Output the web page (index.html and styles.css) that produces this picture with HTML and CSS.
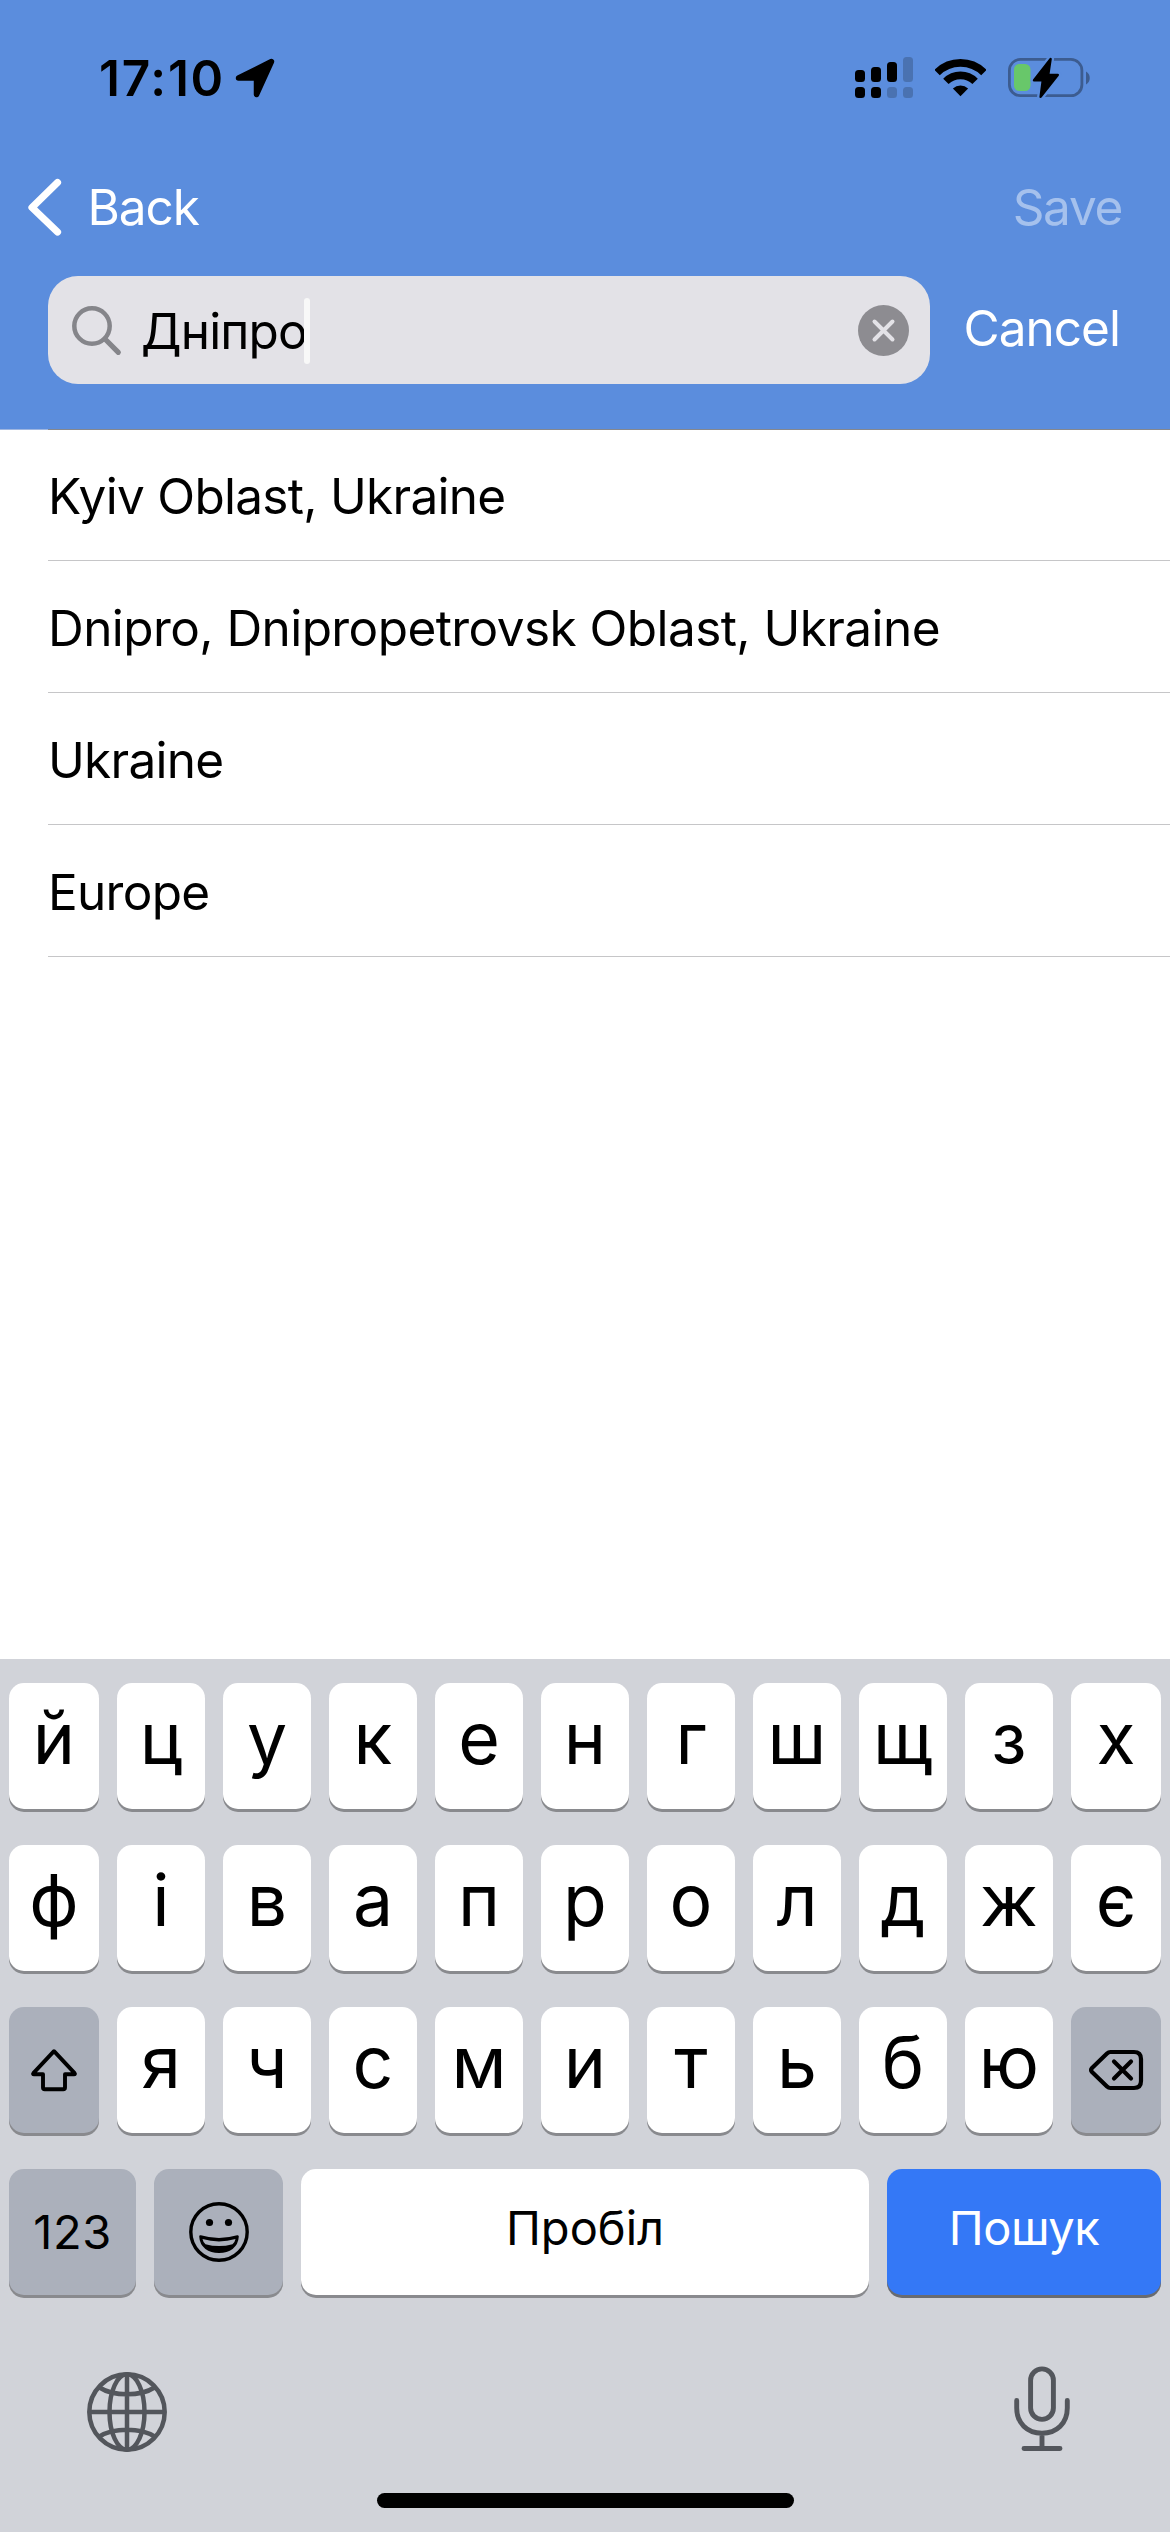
FILE: index.html
```
<!DOCTYPE html>
<html lang="uk">
<head>
<meta charset="utf-8">
<title>Location search</title>
<link rel="stylesheet" href="styles.css">
</head>
<body>
<div class="screen">
  <header class="header">
    <div class="status">
      <span class="time">17:10</span>
      <svg class="location" viewBox="0 0 40 40" width="40" height="40"><path d="M36.500 3.500 21.500 36.500V20H3.500Z" fill="#000" stroke="#000" stroke-width="5.500" stroke-linejoin="round"/></svg>
      <svg class="signal" viewBox="0 0 58 42" width="58" height="42">
        <g fill="#000"><rect y="13" width="10" height="12" rx="3.500"/><rect x="16" y="10" width="10" height="15" rx="3.500"/><rect x="32" y="5" width="10" height="20" rx="3.500"/><rect y="30" width="10" height="11" rx="3.500"/><rect x="16" y="30" width="10" height="11" rx="3.500"/></g>
        <g fill="#4a72b1"><rect x="48" width="10" height="25" rx="3.500"/><rect x="32" y="30" width="10" height="11" rx="3.500"/><rect x="48" y="30" width="10" height="11" rx="3.500"/></g>
      </svg>
      <svg class="wifi" viewBox="0 0 51 38" width="51" height="38">
        <g fill="none" stroke="#000" stroke-width="7.600"><path d="M2.100 13.600A33.100 33.100 0 0 1 48.900 13.600"/><path d="M10.900 22.400A20.600 20.600 0 0 1 40.100 22.400"/></g>
        <path d="M25.500 37.200 17.900 29.500A11 11 0 0 1 33.100 29.500Z"/>
      </svg>
      <svg class="battery" viewBox="0 0 83 42" width="83" height="42">
        <rect x="1.400" y="2.400" width="72.500" height="36.300" rx="11" fill="none" stroke="#3c5c90" stroke-width="2.800"/>
        <path d="M78 14.500C83 17 83 25 78 27.500Z" fill="#3c5c90"/>
        <rect x="6" y="7" width="16.500" height="27" rx="5.500" fill="#68c76a"/>
        <path d="M42.600 2 26 23.200H34.800L32.600 39.800 49.800 18H40.200Z" fill="#000" stroke="#5b8ddd" stroke-width="7" stroke-linejoin="round"/>
        <path d="M42.600 2 26 23.200H34.800L32.600 39.800 49.800 18H40.200Z" fill="#000" stroke="#000" stroke-width="2.400" stroke-linejoin="round"/>
      </svg>
    </div>
    <nav class="nav">
      <svg class="chevron" viewBox="0 0 34 58" width="34" height="58"><path d="M29.500 4.500 4 29.500 29.500 54" fill="none" stroke="#fff" stroke-width="7.200" stroke-linecap="round" stroke-linejoin="round"/></svg>
      <span class="back">Back</span>
      <span class="save">Save</span>
    </nav>
    <div class="search-row">
      <div class="field">
        <svg class="glass" viewBox="0 0 50 50" width="50" height="50"><g fill="none" stroke="#85858a" stroke-width="4.500" stroke-linecap="round"><circle cx="20" cy="20" r="17.700"/><path d="M33 33 46.300 46.300" stroke-width="5.200"/></g></svg>
        <span class="query">Дніпро</span><span class="caret"></span>
        <svg class="clear" viewBox="0 0 51 51" width="51" height="51"><circle cx="25.500" cy="25.500" r="25.500" fill="#8d8c91"/><path d="M16.500 16.500 34.500 34.500M34.500 16.500 16.500 34.500" stroke="#e3e2e7" stroke-width="4" stroke-linecap="round"/></svg>
      </div>
      <span class="cancel">Cancel</span>
    </div>
  </header>
  <div class="topline"></div>
  <ul class="results">
    <li>Kyiv Oblast, Ukraine</li>
    <li class="long">Dnipro, Dnipropetrovsk Oblast, Ukraine</li>
    <li>Ukraine</li>
    <li>Europe</li>
  </ul>
  <section class="keyboard">
    <div class="row">
      <span class="key">й</span><span class="key">ц</span><span class="key">у</span><span class="key">к</span><span class="key">е</span><span class="key">н</span><span class="key">г</span><span class="key">ш</span><span class="key">щ</span><span class="key">з</span><span class="key">х</span>
    </div>
    <div class="row">
      <span class="key">ф</span><span class="key">і</span><span class="key">в</span><span class="key">а</span><span class="key">п</span><span class="key">р</span><span class="key">о</span><span class="key">л</span><span class="key">д</span><span class="key">ж</span><span class="key">є</span>
    </div>
    <div class="row">
      <span class="key gray"><svg viewBox="0 0 48 44" width="48" height="44"><path d="M24 3.200 44.600 25.200Q45.500 26.300 44 26.300H35V39.500Q35 41.300 33.200 41.300H14.800Q13 41.300 13 39.500V26.300H4Q2.500 26.300 3.400 25.200Z" fill="none" stroke="#000" stroke-width="3.900" stroke-linejoin="round"/></svg></span><span class="key">я</span><span class="key">ч</span><span class="key">с</span><span class="key">м</span><span class="key">и</span><span class="key">т</span><span class="key">ь</span><span class="key">б</span><span class="key">ю</span><span class="key gray"><svg viewBox="0 0 56 42" width="56" height="42"><g fill="none" stroke="#000" stroke-width="4.200" stroke-linecap="round" stroke-linejoin="round"><path d="M22.500 3H46Q53 3 53 10V32Q53 39 46 39H22.500Q20.500 39 19 37.500L4 23Q2.200 21 4 19L19 4.500Q20.500 3 22.500 3Z"/><path d="M26 12.500 43 29.500M43 12.500 26 29.500"/></g></svg></span>
    </div>
    <div class="row bottom">
      <span class="key gray digits">123</span>
      <span class="key gray"><svg viewBox="0 0 60 60" width="60" height="60">
        <circle cx="30" cy="30" r="28.200" fill="none" stroke="#000" stroke-width="3.400"/>
        <circle cx="20.500" cy="20.500" r="3.600"/><circle cx="39.500" cy="20.500" r="3.600"/>
        <path d="M11.500 34.500Q30 40 48.500 34.500C48 44.500 40 49.700 30 49.700S12 44.500 11.500 34.500Z" fill="#000" stroke="#000" stroke-width="2.600" stroke-linejoin="round"/>
        <path d="M13.500 37Q30 41.800 46.500 37Q46 40 43.500 42.200Q30 46 16.500 42.200Q14 40 13.500 37Z" fill="#abb0bb"/>
      </svg></span>
      <span class="key label">Пробіл</span>
      <span class="key label blue">Пошук</span>
    </div>
    <div class="tools">
      <svg class="globe" viewBox="0 0 80 80" width="80" height="80"><g fill="none" stroke="#53565c" stroke-width="4.500"><circle cx="40" cy="40" r="37.700"/><ellipse cx="40" cy="40" rx="17.500" ry="37.700"/><path d="M40 2V78M2 40H78M12.500 15.500Q23 22.300 40 22.300T67.500 15.500M12.500 64.500Q23 57.700 40 57.700T67.500 64.500"/></g></svg>
      <svg class="mic" viewBox="0 0 58 86" width="58" height="86"><g fill="none" stroke="#53565c" stroke-width="4.900" stroke-linecap="round"><rect x="17.600" y="2.900" width="22.800" height="50.500" rx="11.400"/><path d="M3.700 34.500V42C3.700 57 14 67.200 29 67.200S54.300 57 54.300 42V34.500M29 67.500V82M11 82.500H47"/></g></svg>
    </div>
    <div class="home"></div>
  </section>
</div>
</body>
</html>
```
FILE: styles.css
```
* { box-sizing: border-box; }
body { margin: 0; }
svg { display: block; flex: none; }
.screen {
  width: 1170px; height: 2532px; background: #fff; color: #000;
  font: 400 49.5px Inter, sans-serif;
  display: flex; flex-direction: column; overflow: hidden; white-space: nowrap;
}
.header { height: 429px; background: #5b8ddd; color: #fff; flex: none; }
.status { height: 141px; padding: 15px 79px 0 99px; display: flex; align-items: center; color: #000; }
.time { font-weight: 600; letter-spacing: 1.78px; width: 138px; }
.signal { margin-left: 580px; }
.wifi { margin-left: 22px; }
.battery { margin-left: 22px; }
.nav { height: 132px; padding: 0 48px 0 27.500px; display: flex; align-items: center; }
.back { margin-left: 26px; letter-spacing: -1.09px; }
.save { margin-left: auto; letter-spacing: -1.3px; color: #a5c1ed; }
.search-row { padding: 3px 0 0 48px; display: flex; }
.field {
  width: 882px; height: 108px; border-radius: 30px; background: #e3e2e7; color: #000;
  display: flex; align-items: center; padding: 1px 21px 0 24px;
}
.query { margin-left: 19px; letter-spacing: -.84px; }
.caret { width: 6px; height: 66px; margin-left: -2.500px; border-radius: 3px; background: #f8f8f8; }
.clear { margin-left: auto; }
.cancel { margin-left: 33.600px; line-height: 104px; letter-spacing: -.99px; }
.topline { height: 1px; margin-bottom: -1px; background: #85878d; border-left: 48px solid #9fb6e0; flex: none; }
.results { list-style: none; margin: 0; padding: 0 0 0 48px; flex: 1; }
.results li { height: 132px; padding-top: 3px; line-height: 128px; border-bottom: 1px solid #c6c6c8; letter-spacing: -.72px; }
.results .long { letter-spacing: -.57px; }
.keyboard { height: 873px; padding: 24px 9px 0; background: #d1d3d9; display: flex; flex-direction: column; flex: none; }
.row { display: grid; grid-template-columns: 90px repeat(9, 88px) 90px; gap: 18px; height: 126px; margin-bottom: 36px; }
.row.bottom { grid-template-columns: 127px 129px 568px 274px; }
.key {
  height: 126px; border-radius: 15px; background: #fff; box-shadow: 0 3px 0 #898a8e;
  font-size: 71.5px; font-weight: 400; line-height: 110px; text-align: center;
}
.key.gray { background: #abb0bb; display: flex; align-items: center; justify-content: center; }
.key.digits { font-size: 47px; letter-spacing: .6px; line-height: 126px; }
.key.label { font-size: 47px; line-height: 118px; }
.key.blue { background: #3478f6; color: #fff; letter-spacing: -.5px; box-shadow: 0 3px 0 #696b70; }
.tools { display: flex; align-items: flex-start; justify-content: space-between; padding: 35px 90px 0 78px; }
.globe { margin-top: 6px; }
.home { width: 417px; height: 15px; border-radius: 8px; background: #000; margin: 41px auto 0; }
```
